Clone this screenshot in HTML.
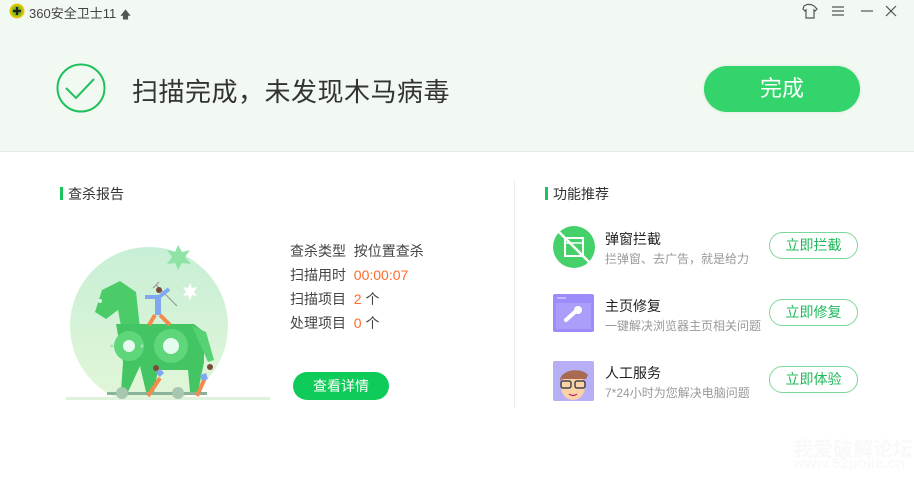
<!DOCTYPE html>
<html><head><meta charset="utf-8"><style>
*{margin:0;padding:0;box-sizing:border-box}
body{width:914px;height:481px;overflow:hidden;background:#fff;font-family:"Liberation Sans","Noto Sans CJK SC",sans-serif;position:relative;color:#333}
.top{position:absolute;left:0;top:0;width:914px;height:152px;background:#f2f8f2;border-bottom:1px solid #e6ece6}
.abs{position:absolute}
.title{left:29px;top:3px;font-size:13px;color:#444}
.h{font-size:14px;color:#333}
.bar{width:3px;height:13px;background:#1cc45c}
.lbl{font-size:14px;color:#444;line-height:24px}
.or{color:#ff6a2c}
.btn{border:1px solid #7ed79a;border-radius:14px;width:89px;height:27px;color:#1fb85a;font-size:14px;text-align:center;line-height:25px}
.ft{font-size:14px;color:#222}
.fs{font-size:12px;color:#999}
</style></head><body>
<div class="top"></div>
<svg class="abs" style="left:9px;top:3px" width="16" height="16"><circle cx="8" cy="8" r="7.5" fill="#e8c400"/><circle cx="8" cy="8" r="5.5" fill="#8cbf1a"/><path d="M8 4v8M4 8h8" stroke="#222" stroke-width="2.4"/></svg>
<div class="abs title">360安全卫士11 <span style="font-size:11px;color:#555">&#x1F845;</span></div>
<svg class="abs" style="left:800px;top:3px" width="110" height="16" fill="none" stroke="#555" stroke-width="1.2">
<path d="M4 3l3-1.5h4L14 3l3 3-2 2-1-1v8H6V7L5 8 3 6z"/>
<path d="M32 4h12M32 8h12M32 12h12"/>
<path d="M61 8h12"/>
<path d="M86 3l10 10M96 3L86 13"/>
</svg>
<svg class="abs" style="left:56px;top:63px" width="50" height="50"><circle cx="25" cy="25" r="23.5" fill="none" stroke="#1fc15a" stroke-width="2"/><path d="M10 25l10 10L38 16" fill="none" stroke="#1fc15a" stroke-width="2"/></svg>
<div class="abs" style="left:132px;top:72px;font-size:26px;color:#333;letter-spacing:0.5px">扫描完成，未发现木马病毒</div>
<div class="abs" style="left:704px;top:66px;width:156px;height:46px;border-radius:23px;background:#33d46c;color:#fff;font-size:22px;text-align:center;line-height:46px;box-shadow:0 0 3px #d0ead5">完成</div>

<div class="abs bar" style="left:60px;top:187px"></div>
<div class="abs h" style="left:68px;top:184px">查杀报告</div>
<div class="abs bar" style="left:545px;top:187px"></div>
<div class="abs h" style="left:553px;top:184px">功能推荐</div>
<div class="abs" style="left:514px;top:180px;width:1px;height:228px;background:#eee"></div>

<svg class="abs" style="left:60px;top:240px" width="215" height="165">
<defs><linearGradient id="g" x1="0" y1="0" x2="0" y2="1"><stop offset="0" stop-color="#c7efd6"/><stop offset="1" stop-color="#e3f6d8"/></linearGradient>
<clipPath id="c"><rect x="0" y="0" width="215" height="158"/></clipPath></defs>
<circle cx="89" cy="86" r="79" fill="url(#g)" clip-path="url(#c)"/>
<rect x="6" y="157" width="204" height="3" fill="#e0f2dc"/>
<polygon points="118,5 122,12 130,10 125,17 131,24 122,23 118,30 115,23 107,24 112,17 107,10 115,12" fill="#8fe3a5"/>
<polygon points="130,43 132,48 137,47 134,52 137,56 132,55 130,60 128,55 123,56 126,52 123,47 128,48" fill="#fff"/>
<path d="M42 50L60 41 76 52 80 88 62 92 58 70 46 79 35 72Z" fill="#4ccc68"/>
<path d="M56 84h78l10 8v30l-6 30h-8l-2-22h-30l-4 22h-8l-6-26-12 26h-7l2-30z" fill="#44c563"/>
<path d="M132 86l14 6 8 28-6 2z" fill="#56d274"/>
<circle cx="69" cy="106" r="15" fill="#5fd67a"/><circle cx="69" cy="106" r="6" fill="#e6fbf0"/>
<circle cx="111" cy="106" r="17" fill="#5fd67a"/><circle cx="111" cy="106" r="8" fill="#e6fbf0"/>
<circle cx="52" cy="106" r="1.5" fill="#9de6b0"/><circle cx="82" cy="106" r="1.5" fill="#9de6b0"/>
<circle cx="40" cy="61" r="2" fill="#d8f6e0"/>
<rect x="47" y="152" width="100" height="3" fill="#8ab49a"/>
<circle cx="62" cy="153" r="6" fill="#a7c7b0"/><circle cx="118" cy="153" r="6" fill="#a7c7b0"/>
<path d="M96 45l21 21M93 48l6-6" stroke="#999" stroke-width="1.2"/>
<path d="M85 57l14 0 10-8" stroke="#7fa8f0" stroke-width="4" fill="none"/>
<path d="M98 55v20" stroke="#7fa8f0" stroke-width="6"/>
<path d="M95 75l-6 10M100 75l10 10" stroke="#f28b4c" stroke-width="4"/>
<circle cx="99" cy="50" r="3" fill="#7a4a3a"/>
<path d="M100 138l-12 18M145 138l-8 18" stroke="#f28b4c" stroke-width="4"/>
<path d="M102 135l-4-4M147 136l-6 2" stroke="#7fa8f0" stroke-width="6"/>
<circle cx="96" cy="128" r="3" fill="#7a4a3a"/><circle cx="150" cy="127" r="3" fill="#7a4a3a"/>
</svg>

<div class="abs lbl" style="left:290px;top:239px">查杀类型&nbsp; 按位置查杀<br>扫描用时&nbsp; <span class="or">00:00:07</span><br>扫描项目&nbsp; <span class="or">2</span> 个<br>处理项目&nbsp; <span class="or">0</span> 个</div>
<div class="abs" style="left:293px;top:372px;width:96px;height:28px;border-radius:14px;background:#0fcb5a;color:#fff;font-size:14px;text-align:center;line-height:28px">查看详情</div>

<svg class="abs" style="left:553px;top:226px" width="42" height="42"><circle cx="21" cy="21" r="21" fill="#45d06a"/><rect x="12" y="12" width="18" height="18" fill="none" stroke="#fff" stroke-width="2"/><path d="M12 17h18" stroke="#fff" stroke-width="1.5"/><path d="M6 6l30 30" stroke="#fff" stroke-width="2.5"/></svg>
<div class="abs ft" style="left:605px;top:229px">弹窗拦截</div>
<div class="abs fs" style="left:605px;top:250px">拦弹窗、去广告，就是给力</div>
<div class="abs btn" style="left:769px;top:232px">立即拦截</div>

<svg class="abs" style="left:553px;top:294px" width="41" height="38"><rect width="41" height="38" rx="2" fill="#9b8cfa"/><rect x="3" y="9" width="35" height="26" fill="#ab9efb"/><rect x="4" y="3" width="9" height="2" fill="#c4bcfd"/><path d="M13 26l10-9" stroke="#fff" stroke-width="4" stroke-linecap="round"/><circle cx="25" cy="16" r="4" fill="#fff"/></svg>
<div class="abs ft" style="left:605px;top:296px">主页修复</div>
<div class="abs fs" style="left:605px;top:317px">一键解决浏览器主页相关问题</div>
<div class="abs btn" style="left:769px;top:299px">立即修复</div>

<svg class="abs" style="left:553px;top:361px" width="41" height="40"><rect width="41" height="40" rx="2" fill="#b6aff5"/><ellipse cx="20" cy="26" rx="12" ry="13" fill="#fcd2a8"/><path d="M7 20c0-12 22-14 28-6l-2 4H9z" fill="#a86a50"/><rect x="8" y="20" width="10" height="7" rx="2" fill="none" stroke="#444" stroke-width="1.5"/><rect x="22" y="20" width="10" height="7" rx="2" fill="none" stroke="#444" stroke-width="1.5"/><path d="M16 33q4 3 8 0" stroke="#a05" fill="none"/></svg>
<div class="abs ft" style="left:605px;top:363px">人工服务</div>
<div class="abs fs" style="left:605px;top:384px">7*24小时为您解决电脑问题</div>
<div class="abs btn" style="left:769px;top:366px">立即体验</div>

<div class="abs" style="left:793px;top:433px;font-size:20px;color:#f9f9f9;font-weight:bold;white-space:nowrap">我爱破解论坛</div>
<div class="abs" style="left:793px;top:455px;font-size:15px;color:#f9f9f9;font-weight:bold">www.52pojie.cn</div>
</body></html>
